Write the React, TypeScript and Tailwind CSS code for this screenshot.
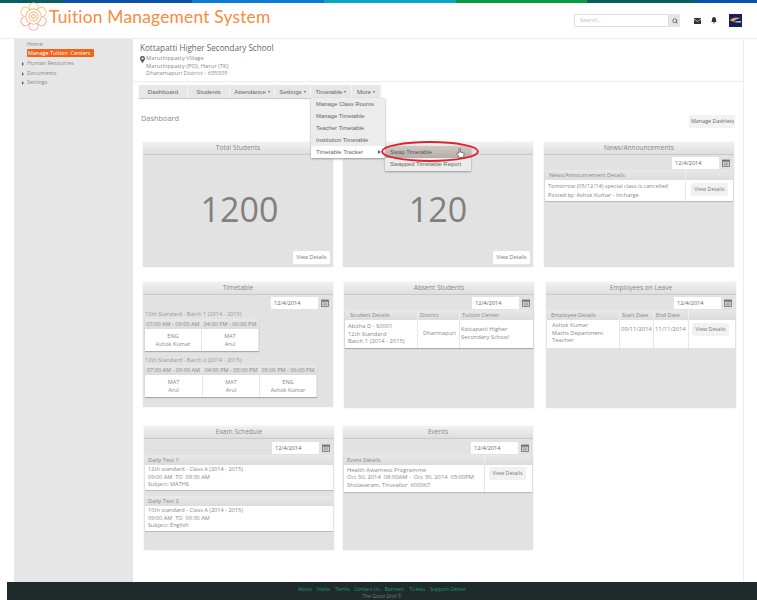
// App.tsx - Tuition Management System dashboard
import type { ReactNode } from 'react';
import { Search } from 'lucide-react';

function Logo() {
  const petals = [0, 60, 120, 180, 240, 300];
  return (
    <svg width="27" height="30" viewBox="0 0 30 33" className="shrink-0">
      {petals.map((a) => (
        <rect
          key={a}
          x="10"
          y="1"
          width="10"
          height="9"
          rx="4"
          fill="#fff"
          stroke={a > 90 && a < 270 ? '#f7a5a0' : '#fbc68e'}
          strokeWidth="1"
          transform={`rotate(${a} 15 16)`}
        />
      ))}
      <circle cx="15" cy="16" r="8.5" fill="#fff" stroke="#fbbf86" strokeWidth="1.2" />
      <circle cx="15" cy="16" r="5" fill="none" stroke="#fbb36f" strokeWidth="1.2" />
      <circle cx="15" cy="16" r="2.2" fill="none" stroke="#fba45c" strokeWidth="1" />
    </svg>
  );
}

function CalendarBtn() {
  return (
    <div className="w-[10px] h-[13px] flex items-center justify-center">
      <svg width="8" height="8" viewBox="0 0 8 8">
        <rect x="0.5" y="1" width="7" height="6.5" fill="#d8d8d8" stroke="#6f6f6f" strokeWidth="0.8" />
        <rect x="0.5" y="1" width="7" height="1.6" fill="#6f6f6f" />
        <path d="M1.5 4h5M1.5 5.5h5M3 3v4M5 3v4" stroke="#8a8a8a" strokeWidth="0.5" />
      </svg>
    </div>
  );
}

function DateRow({ className = '' }: { className?: string }) {
  return (
    <div className={`flex justify-end items-center gap-[2px] pr-[3px] h-[13px] ${className}`}>
      <div className="w-[47px] h-[12px] bg-white pl-[3px] text-[5.6px] leading-[12px] text-[#666]">12/4/2014</div>
      <CalendarBtn />
    </div>
  );
}

function Card({ title, children, className = '' }: { title: string; children: ReactNode; className?: string }) {
  return (
    <div className={`w-[190px] bg-[#e2e2e2] rounded-[2px] shadow-[0_0_1px_#bbb] flex flex-col ${className}`}>
      <div className="h-[13px] shrink-0 rounded-t-[2px] bg-gradient-to-b from-[#f2f2f2] to-[#dedede] border-b border-[#c9c9c9] text-center text-[6.6px] leading-[12px] text-[#888]">
        {title}
      </div>
      {children}
    </div>
  );
}

function ViewBtn({ className = '' }: { className?: string }) {
  return (
    <div className={`rounded-[2px] bg-[#f1f1f1] text-[5.4px] leading-[13px] h-[13px] w-[37px] text-center text-[#777] ${className}`}>
      View Details
    </div>
  );
}

function Th({ children, className = '' }: { children?: ReactNode; className?: string }) {
  return <div className={`bg-gradient-to-b from-[#e8e8e8] to-[#dcdcdc] text-[5.6px] leading-[10px] text-[#888] ${className}`}>{children}</div>;
}

function Slot({ time, subject, who, w }: { time: string; subject: string; who: string; w: string }) {
  return (
    <div className={`${w} border-r border-[#e6e6e6] text-center`}>
      <Th className="h-[10px] whitespace-nowrap">{time}</Th>
      <div className="h-[22px] bg-white text-[5.6px] leading-[8px] text-[#888] pt-[3px]">
        <div>{subject}</div>
        <div>{who}</div>
      </div>
    </div>
  );
}

function Batch({ title, children, className = '' }: { title: string; children: ReactNode; className?: string }) {
  return (
    <div className={className}>
      <div className="pl-[2px] text-[5.6px] leading-[9px] text-[#999] whitespace-nowrap">{title}</div>
      <div className="flex ml-[2px] w-fit shadow-[0_1px_1px_#aaa]">{children}</div>
    </div>
  );
}

function TestBlock({ title, lines, className = '' }: { title: string; lines: string[]; className?: string }) {
  return (
    <div className={`mx-[1px] ${className}`}>
      <div className="h-[10px] pl-[3px] text-[5.8px] leading-[10px] text-[#888] bg-gradient-to-b from-[#e9e9e9] to-[#dcdcdc]">{title}</div>
      <div className="h-[26px] bg-white border-b border-[#bbb] pl-[3px] pt-[1px] text-[5.6px] leading-[7.7px] text-[#888]">
        {lines.map((l) => (
          <div key={l} className="whitespace-pre">{l}</div>
        ))}
      </div>
    </div>
  );
}

const NAV = [
  { label: 'Dashboard', w: 'w-[49px]' },
  { label: 'Students', w: 'w-[42px]' },
  { label: 'Attendance', w: 'w-[45px]', caret: true },
  { label: 'Settings', w: 'w-[36px]', caret: true },
  { label: 'Timetable', w: 'w-[41px]', caret: true, menu: true },
  { label: 'More', w: 'w-[29px]', caret: true },
];

function TimetableMenu() {
  return (
    <div className="absolute left-0 top-full w-[74px] bg-[#ececec] shadow-[0_1px_2px_#999] z-10 text-left text-[5.9px] leading-[12px] text-[#666]">
      {['Manage Class Rooms', 'Manage Timetable', 'Teacher Timetable', 'Institution Timetable'].map((m) => (
        <div key={m} className="pl-[5px] h-[12px] whitespace-nowrap">{m}</div>
      ))}
      <div className="relative pl-[5px] h-[12px] bg-white whitespace-nowrap">
        Timetable Tracker
        <span className="absolute right-[4px] top-[4px] border-y-[2px] border-l-[3px] border-y-transparent border-l-[#666]" />
        <div className="absolute left-full top-0 w-[86px] bg-[#ececec] shadow-[0_1px_2px_#999]">
          <div className="h-[12px] pl-[5px] bg-gradient-to-b from-[#cdc8c3] to-[#b5aea8] text-[#555]">Swap Timetable</div>
          <div className="h-[13px] pl-[5px] leading-[13px]">Swapped Timetable Report</div>
        </div>
        <svg width="100" height="24" viewBox="0 0 100 24" className="absolute left-[69px] top-[-6px] overflow-visible">
          <ellipse cx="50" cy="11.5" rx="48" ry="9.5" fill="none" stroke="#e2202c" strokeWidth="1.8" />
        </svg>
        <svg width="9" height="10" viewBox="0 0 9 10" className="absolute left-[145px] top-[2px]">
          <path
            d="M3 5V1.2c0-.9 1.3-.9 1.3 0V4l2.6.6c.8.2 1.2.8 1.1 1.6L7.6 9.4H3.4L1 6.2c-.5-.8.5-1.5 1.1-.9z"
            fill="#fff"
            stroke="#444"
            strokeWidth="0.7"
          />
        </svg>
      </div>
    </div>
  );
}

export default function App() {
  return (
    <div className="w-[757px] h-[600px] overflow-hidden bg-white flex flex-col font-['Open_Sans',sans-serif]">
      {/* top colour strip */}
      <div className="h-[3px] flex shrink-0">
        <div className="w-[63px] bg-[#0b5e63]" />
        <div className="w-[129px] bg-[#0a4fa8]" />
        <div className="w-[132px] bg-[#0b79d4]" />
        <div className="w-[132px] bg-[#0aa6c2]" />
        <div className="w-[131px] bg-[#0a9a42]" />
        <div className="w-[109px] bg-[#0b5e5e]" />
        <div className="flex-1 bg-[#0a52b0]" />
      </div>

      {/* header */}
      <div className="h-[36px] shrink-0 border-b border-[#e8eeee] flex items-center pl-[20px] pr-[15px]">
        <div className="flex items-center -mt-[7px]">
          <Logo />
          <div className="ml-[2px] text-[17.4px] leading-none text-[#fb8a3c] whitespace-nowrap font-['Lato',sans-serif] tracking-[0.2px]">
            Tuition Management System
          </div>
        </div>
        <div className="ml-auto flex items-center">
          <div className="w-[95px] h-[13px] bg-white border border-[#ddd] rounded-l-[1px] pl-[5px] text-[5.5px] leading-[11px] text-[#bbb]">
            Search...
          </div>
          <div className="w-[11px] h-[13px] bg-[#e6e6e6] flex items-center justify-center rounded-r-[1px]">
            <Search size={6} strokeWidth={3} color="#555" />
          </div>
          <svg width="7" height="6" viewBox="0 0 7 6" className="ml-[14px]">
            <rect width="7" height="6" fill="#333" />
            <path d="M0 1l3.5 2.4L7 1" fill="none" stroke="#ddd" strokeWidth="0.8" />
          </svg>
          <svg width="6" height="7" viewBox="0 0 6 7" className="ml-[10px]">
            <path d="M3 0c1.4 0 2 1 2 2.4 0 1.4.4 2 1 2.6H0c.6-.6 1-1.2 1-2.6C1 1 1.6 0 3 0z M2 5.6h2a1 1 0 0 1-2 0z" fill="#333" />
          </svg>
          <div className="ml-[12px] w-[13px] h-[13px] bg-[#12205e] relative overflow-hidden">
            <svg width="13" height="13" viewBox="0 0 13 13">
              <path d="M1 6c3-3 7-3 11-2-3 .5-5 1.5-7 3-1 .8-3 .5-4-1z" fill="#e8a73c" />
              <path d="M4 8c3-1 5-1 8-1v1.5c-3 0-5 0-8-.5z" fill="#c9c9d8" />
            </svg>
          </div>
        </div>
      </div>

      {/* main */}
      <div className="flex-1 min-h-0 flex pl-[14px]">
        <div className="w-[119px] shrink-0 bg-[#e6e6e6] pt-[1px] pl-[13px] text-[5.5px] text-[#888]">
          <div className="leading-[9px]">Home</div>
          <div className="w-[67px] h-[8px] rounded-[1px] bg-[#f2641a] text-white leading-[8px] pl-[1px] whitespace-pre">Manage Tuition  Centers</div>
          <div className="h-[2px]" />
          {['Human Resources', 'Documents', 'Settings'].map((s) => (
            <div key={s} className="relative leading-[9.5px]">
              <span className="absolute -left-[5px] top-[3px] border-y-[2px] border-l-[2.5px] border-y-transparent border-l-[#666]" />
              {s}
            </div>
          ))}
        </div>

        <div className="w-[611px] shrink-0 border-r border-[#e8eeee]">
          {/* school */}
          <div className="h-[43px] border-b border-[#e8eeee] pl-[7px] pt-[3px]">
            <div className="text-[8.1px] leading-[11px] text-[#666]">Kottapatti Higher Secondary School</div>
            <div className="relative pl-[6px] mt-[2px] text-[5.8px] leading-[7.5px] text-[#888]">
              <svg width="5" height="7" viewBox="0 0 5 7" className="absolute left-[0px] top-[0.5px]">
                <path fillRule="evenodd" d="M2.5 0a2.5 2.5 0 0 1 2.5 2.5C5 4 3.4 5.6 2.5 7 1.6 5.6 0 4 0 2.5A2.5 2.5 0 0 1 2.5 0zm0 1.4a1.1 1.1 0 1 0 0 2.2 1.1 1.1 0 0 0 0-2.2z" fill="#555" />
              </svg>
              <div>Maruthippatty Village</div>
              <div>Maruthippatty (PO), Harur (TK)</div>
              <div>Dharamapuri District - 635305</div>
            </div>
          </div>

          {/* nav */}
          <div className="ml-[6px] mt-[3px] flex w-fit h-[13px] bg-[#e7e7e7] shadow-[0_1px_1px_#ccc] text-[6.2px] leading-[13px] text-[#666] font-['Liberation_Sans',sans-serif]">
            {NAV.map((n) => (
              <div key={n.label} className={`relative ${n.w} border-r border-[#f4f4f4] text-center whitespace-nowrap`}>
                {n.label}
                {n.caret && <span className="ml-[2px] inline-block align-middle border-x-[1.5px] border-t-[2px] border-x-transparent border-t-[#666]" />}
                {n.menu && <TimetableMenu />}
              </div>
            ))}
          </div>

          {/* title row */}
          <div className="h-[44px] flex items-start">
            <div className="ml-[8px] mt-[16px] text-[7.4px] leading-[9px] text-[#888]">Dashboard</div>
            <div className="ml-auto mr-[8px] mt-[17px] w-[46px] h-[13px] bg-[#f2f2f2] rounded-l-[1px] pl-[2px] text-[5.4px] leading-[13px] text-[#666] whitespace-nowrap">
              Manage Dashlets
            </div>
          </div>

          {/* dashlets */}
          <div className="grid grid-cols-[190px_190px_190px] gap-x-[10px] pl-[10px]">
            <Card title="Total Students" className="h-[125px]">
              <div className="flex-1 flex flex-col items-center relative">
                <div className="mt-[28px] ml-[3px] text-[34px] leading-[52px] text-[#808080]">1200</div>
                <ViewBtn className="absolute right-[3px] bottom-[3px] bg-white" />
              </div>
            </Card>
            <Card title="" className="h-[125px]">
              <div className="flex-1 flex flex-col items-center relative">
                <div className="mt-[28px] text-[34px] leading-[52px] text-[#808080]">120</div>
                <ViewBtn className="absolute right-[3px] bottom-[3px] bg-white" />
              </div>
            </Card>
            <Card title="News/Announcements" className="h-[125px] ml-[1px]">
              <DateRow className="mt-[1px]" />
              <div className="mx-[1px] mt-[1px] shadow-[0_1px_1px_#bbb]">
                <div className="flex">
                  <Th className="w-[141px] pl-[4px] border-r border-[#eee]">News/Announcement Details</Th>
                  <Th className="flex-1" />
                </div>
                <div className="flex bg-white h-[21px]">
                  <div className="w-[141px] pl-[3px] pt-[2px] text-[5.6px] leading-[9px] text-[#888] border-r border-[#e6e6e6] whitespace-nowrap">
                    <div>Tomorrow (05/12/14) special class is cancelled</div>
                    <div>Posted by: Ashok Kumar - Incharge</div>
                  </div>
                  <ViewBtn className="ml-[5px] mt-[3px]" />
                </div>
              </div>
            </Card>

            <Card title="Timetable" className="h-[125px] mt-[15px]">
              <DateRow className="mt-[1px]" />
              <Batch title="12th Standard - Batch 1 (2014 - 2015)" className="mt-[1px]">
                <Slot w="w-[57px]" time="07:00 AM - 09:00 AM" subject="ENG" who="Ashok Kumar" />
                <Slot w="w-[57px]" time="04:00 PM - 06:00 PM" subject="MAT" who="Arul" />
              </Batch>
              <Batch title="12th Standard - Batch 2 (2014 - 2015)" className="mt-[5px]">
                <Slot w="w-[58px]" time="07:00 AM - 09:00 AM" subject="MAT" who="Arul" />
                <Slot w="w-[57px]" time="04:00 PM - 05:00 PM" subject="MAT" who="Arul" />
                <Slot w="w-[57px]" time="05:00 PM - 06:00 PM" subject="ENG" who="Ashok Kumar" />
              </Batch>
            </Card>
            <Card title="Absent Students" className="h-[126px] mt-[15px] ml-[1px]">
              <DateRow className="mt-[1px]" />
              <div className="mx-[1px] mt-[1px] shadow-[0_1px_1px_#aaa]">
                <div className="flex h-[10px]">
                  <Th className="w-[73px] pl-[5px] border-r border-[#eee]">Student Details</Th>
                  <Th className="w-[42px] pl-[2px] border-r border-[#eee]">District</Th>
                  <Th className="flex-1 pl-[2px]">Tuition Center</Th>
                </div>
                <div className="flex bg-white h-[28px] text-[5.8px] leading-[7.5px] text-[#888]">
                  <div className="w-[73px] pl-[3px] pt-[3px] border-r border-[#e6e6e6] whitespace-nowrap">
                    <div>Abitha D - S0001</div>
                    <div>12th Standard</div>
                    <div>Batch 1 (2014 - 2015)</div>
                  </div>
                  <div className="w-[42px] pl-[5px] pt-[10px] border-r border-[#e6e6e6]">Dharmapuri</div>
                  <div className="flex-1 pl-[1px] pt-[6px] whitespace-nowrap">
                    <div>Kottapatti Higher</div>
                    <div>Secondary School</div>
                  </div>
                </div>
              </div>
            </Card>
            <Card title="Employees on Leave" className="h-[126px] mt-[15px] ml-[3px]">
              <DateRow className="mt-[1px]" />
              <div className="mx-[1px] mt-[1px]">
                <div className="flex h-[10px]">
                  <Th className="w-[73px] pl-[4px] border-r border-[#eee]">Employee Details</Th>
                  <Th className="w-[34px] pl-[2px] border-r border-[#eee]">Start Date</Th>
                  <Th className="w-[35px] pl-[2px] border-r border-[#eee]">End Date</Th>
                  <Th className="flex-1" />
                </div>
                <div className="flex bg-white h-[28px] text-[5.8px] leading-[7.5px] text-[#888]">
                  <div className="w-[73px] pl-[5px] pt-[2px] border-r border-[#e6e6e6] whitespace-nowrap">
                    <div>Ashok Kumar</div>
                    <div>Maths Department</div>
                    <div>Teacher</div>
                  </div>
                  <div className="w-[34px] pl-[1px] pt-[6px] border-r border-[#e6e6e6]">09/11/2014</div>
                  <div className="w-[35px] pl-[1px] pt-[6px] border-r border-[#e6e6e6]">11/11/2014</div>
                  <ViewBtn className="ml-[3px] mt-[3px]" />
                </div>
              </div>
            </Card>

            <Card title="Exam Schedule" className="h-[124px] mt-[18px] ml-[1px] w-[189px]">
              <DateRow className="mt-[2px]" />
              <TestBlock
                className="mt-[1px]"
                title="Daily Test 1"
                lines={['12th standard - Class A (2014 - 2015)', '09:00 AM  TO  09:30 AM', 'Subject: MATHS']}
              />
              <TestBlock
                className="mt-[5px]"
                title="Daily Test 2"
                lines={['10th standard - Class A (2014 - 2015)', '09:00 AM  TO  09:30 AM', 'Subject: English']}
              />
            </Card>
            <Card title="Events" className="h-[124px] mt-[18px] w-[189px]">
              <DateRow className="mt-[2px]" />
              <div className="mx-[1px] mt-[1px] shadow-[0_1px_1px_#bbb]">
                <div className="flex">
                  <Th className="w-[141px] pl-[3px] border-r border-[#eee]">Event Details</Th>
                  <Th className="flex-1" />
                </div>
                <div className="flex bg-white h-[27px]">
                  <div className="w-[141px] pl-[3px] pt-[2px] text-[5.8px] leading-[7.3px] text-[#888] border-r border-[#e6e6e6] whitespace-pre">
                    <div>Health Awarness Programme</div>
                    <div>Oct 30, 2014  08:00AM -  Oct 30, 2014  05:00PM</div>
                    <div>Sholavaram, Tiruvallur  600067</div>
                  </div>
                  <ViewBtn className="ml-[4px] mt-[2px]" />
                </div>
              </div>
            </Card>
          </div>
        </div>
      </div>

      {/* footer */}
      <div className="h-[18px] shrink-0 ml-[7px] bg-[#1f2b2b] overflow-hidden text-center text-[5px] leading-[7px] pt-[4px]">
        <div className="flex justify-center gap-[5px] text-[#1a9a72]">
          {['About', 'Invite', 'Terms', 'Contact Us', 'Banners', 'Tickets', 'Support Center'].map((f) => (
            <span key={f}>{f}</span>
          ))}
        </div>
        <div className="text-[#777]">The Good Grid ©</div>
      </div>
    </div>
  );
}
